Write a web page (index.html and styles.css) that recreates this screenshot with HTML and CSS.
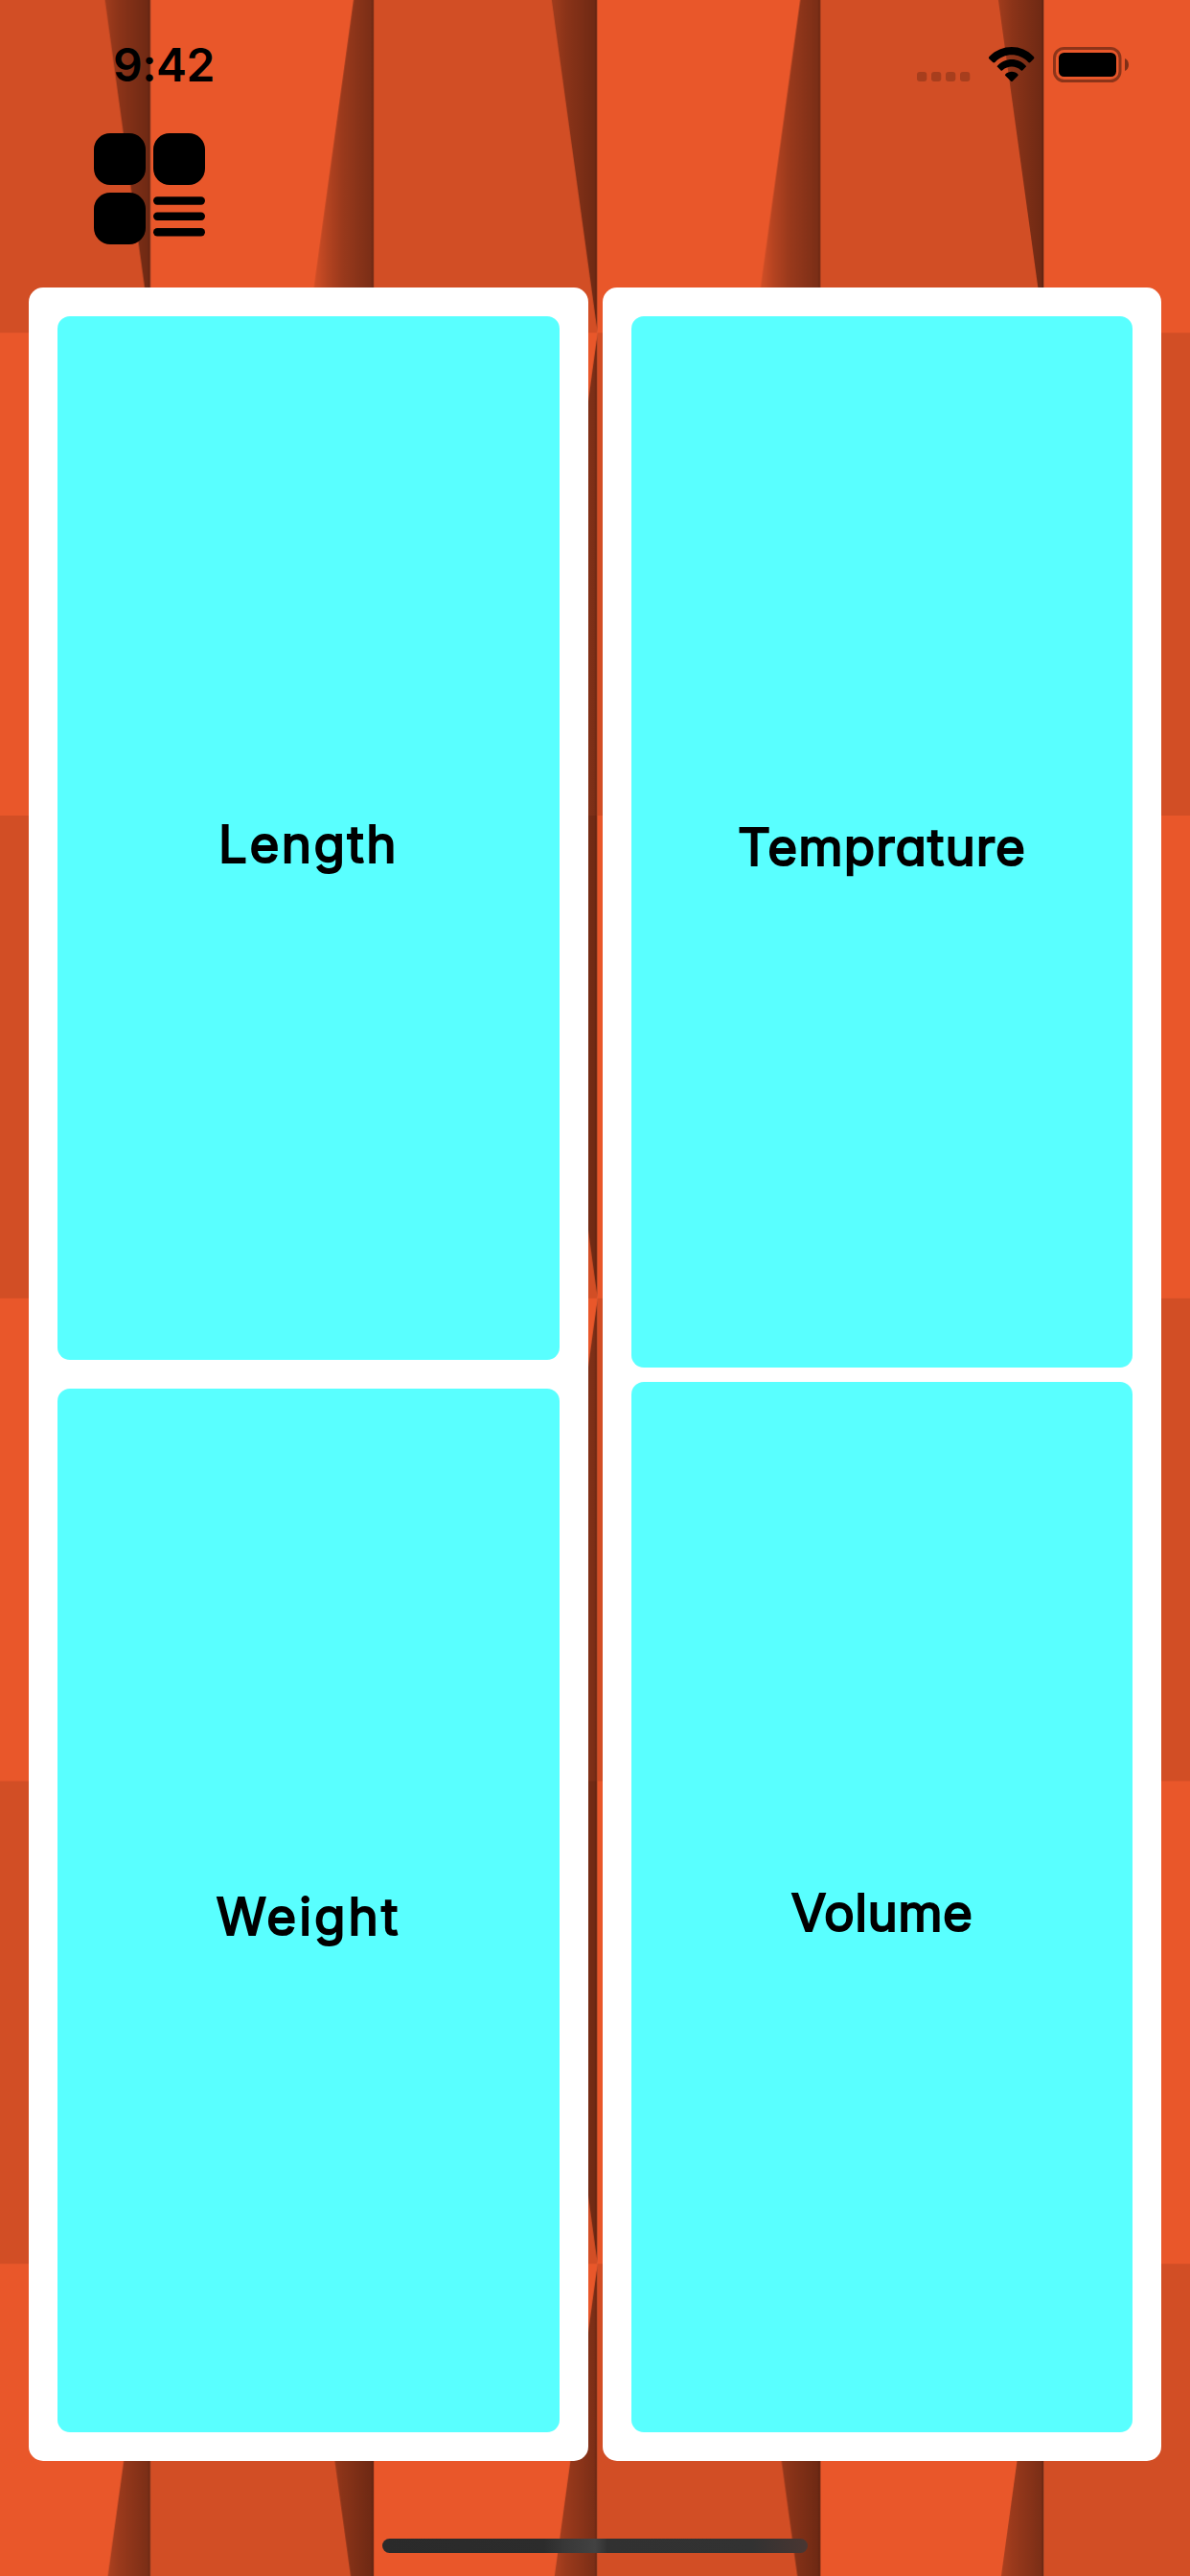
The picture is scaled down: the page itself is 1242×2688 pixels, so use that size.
FILE: index.html
```html
<!DOCTYPE html>
<html lang="en">
<head>
<meta charset="utf-8">
<title>Unit Converter</title>
<link rel="stylesheet" href="styles.css">
</head>
<body>
<div class="screen">
  <svg class="wallpaper" width="1242" height="2688" viewBox="0 0 1242 2688" aria-hidden="true">
    <defs>
      <linearGradient id="fold">
        <stop offset="0" stop-color="#000" stop-opacity=".04"/>
        <stop offset=".3" stop-color="#000" stop-opacity=".23"/>
        <stop offset=".52" stop-color="#000" stop-opacity=".34"/>
        <stop offset=".95" stop-color="#000" stop-opacity=".47"/>
        <stop offset=".98" stop-color="#000" stop-opacity=".54"/>
        <stop offset="1" stop-color="#000" stop-opacity=".35"/>
      </linearGradient>
      <linearGradient id="homeBar">
        <stop offset="0" stop-color="#2a2a2a"/>
        <stop offset=".38" stop-color="#2c2c2c"/>
        <stop offset=".43" stop-color="#383838"/>
        <stop offset=".5" stop-color="#424242"/>
        <stop offset=".53" stop-color="#313131"/>
        <stop offset=".87" stop-color="#323232"/>
        <stop offset="1" stop-color="#4a3632"/>
      </linearGradient>
      <g id="dark">
        <rect width="233.5" height="504.5" fill="#d24e25"/>
        <path d="M164 0H233.500V504Z" fill="url(#fold)"/>
      </g>
      <g id="light">
        <rect width="233.5" height="504.5" fill="#e9572a"/>
        <path d="M233.500 0V504H164Z" fill="url(#fold)"/>
      </g>
      <pattern id="tiles" x="-76" y="-156.5" width="466.2" height="1007.5" patternUnits="userSpaceOnUse">
        <use href="#dark"/>
        <use href="#light" x="233.1"/>
        <use href="#light" y="503.75"/>
        <use href="#dark" x="233.1" y="503.75"/>
      </pattern>
    </defs>
    <rect width="1242" height="2688" fill="url(#tiles)"/>
  </svg>

  <header class="status">
    <span class="clock">9:42</span>
    <svg class="indicators" width="222" height="40" viewBox="0 0 222 40" aria-hidden="true">
      <g opacity=".2">
        <rect x="0" y="27" width="10.3" height="10" rx="3"/>
        <rect x="15" y="27" width="10.3" height="10" rx="3"/>
        <rect x="30" y="27" width="10.3" height="10" rx="3"/>
        <rect x="45" y="27" width="10.3" height="10" rx="3"/>
      </g>
      <path d="M75.5 11C88.500 -2.300 109.500 -2.300 121.800 11Q123 12.300 121.800 13.600L118.300 17Q117.300 17.800 116.300 16.900C106.500 6.800 91.500 6.800 81.500 16.900Q80.300 17.800 79.200 17L75.500 13.600Q74.300 12.300 75.500 11Z"/>
      <path d="M83.500 21.200C92 11.600 106 11.600 114.200 21.200L110.400 25.200Q109.500 26.200 108.500 25.200C103 20.300 95 20.300 89.300 25.200Q88.300 26.200 87.400 25.200Z"/>
      <path d="M92.300 29.400C95.500 25.800 102.500 25.800 105.400 29.400Q106.200 30.100 105.400 31L99.700 36.700Q98.900 37.400 98.100 36.700L92.300 31Q91.500 30.100 92.300 29.400Z"/>
      <rect x="143.500" y="2.500" width="68.500" height="34" rx="10" fill="none" stroke="#000" stroke-opacity=".4" stroke-width="3"/>
      <rect x="148" y="7" width="60" height="25" rx="5.500"/>
      <path d="M217 13C222.300 15 222.300 24 217 26Z" opacity=".45"/>
    </svg>
  </header>

  <nav class="toolbar">
    <button class="menu" type="button" aria-label="Categories">
      <svg width="116" height="116" viewBox="0 0 116 116">
        <rect width="54" height="54" rx="17"/>
        <rect x="62" width="54" height="54" rx="17"/>
        <rect y="62" width="54" height="54" rx="17"/>
        <rect x="62" y="66.300" width="54" height="8.400" rx="4.200"/>
        <rect x="62" y="82.600" width="54" height="8.400" rx="4.200"/>
        <rect x="62" y="99" width="54" height="8.400" rx="4.200"/>
      </svg>
    </button>
  </nav>

  <main class="panels">
    <section class="panel panel-left">
      <button class="tile" type="button"><span class="label length">Length</span></button>
      <button class="tile" type="button"><span class="label weight">Weight</span></button>
    </section>
    <section class="panel panel-right">
      <button class="tile" type="button"><span class="label temperature">Temprature</span></button>
      <button class="tile" type="button"><span class="label volume">Volume</span></button>
    </section>
  </main>

  <footer class="home">
    <svg width="444" height="15" aria-hidden="true"><rect width="444" height="15" rx="7.500" fill="url(#homeBar)"/></svg>
  </footer>
</div>
</body>
</html>
```
FILE: styles.css
```css
* { box-sizing: border-box; }

body { margin: 0; }

svg { display: block; }

button {
  margin: 0;
  padding: 0;
  border: 0;
  background: none;
  color: #000;
}

.screen {
  position: relative;
  isolation: isolate;
  display: flex;
  flex-direction: column;
  width: 1242px;
  height: 2688px;
  overflow: hidden;
}

.wallpaper {
  position: absolute;
  inset: 0;
  z-index: -1;
}

.status {
  display: flex;
  justify-content: space-between;
  align-items: flex-start;
  height: 139px;
  padding: 48px 63px 0 118px;
}

.clock {
  font: 600 48px/40px Inter, sans-serif;
  letter-spacing: -0.5px;
}

.toolbar {
  height: 161px;
  padding-left: 98px;
}

.panels {
  display: grid;
  grid-template-columns: 584px 583px;
  gap: 15px;
  height: 2268px;
  padding-left: 30px;
}

.panel {
  display: grid;
  grid-template-rows: 1fr 1fr;
  padding: 30px;
  border-radius: 15px;
  background: #fff;
}

.panel-left { gap: 30px; }
.panel-right { gap: 15px; }

.tile {
  display: flex;
  align-items: center;
  justify-content: center;
  border-radius: 13px;
  background: #59ffff;
}

.label {
  padding-top: 12px;
  font: 400 53px/70px "Chalkboard SE", Inter, sans-serif;
  font-feature-settings: "cv11" 1;
  -webkit-text-stroke: 2px #000;
}

.length { letter-spacing: 2.4px; }
.weight { letter-spacing: 3px; }
.temperature { letter-spacing: 1.1px; }
.volume { letter-spacing: 0.4px; }

.home {
  display: flex;
  justify-content: center;
  padding-top: 81px;
}
```
